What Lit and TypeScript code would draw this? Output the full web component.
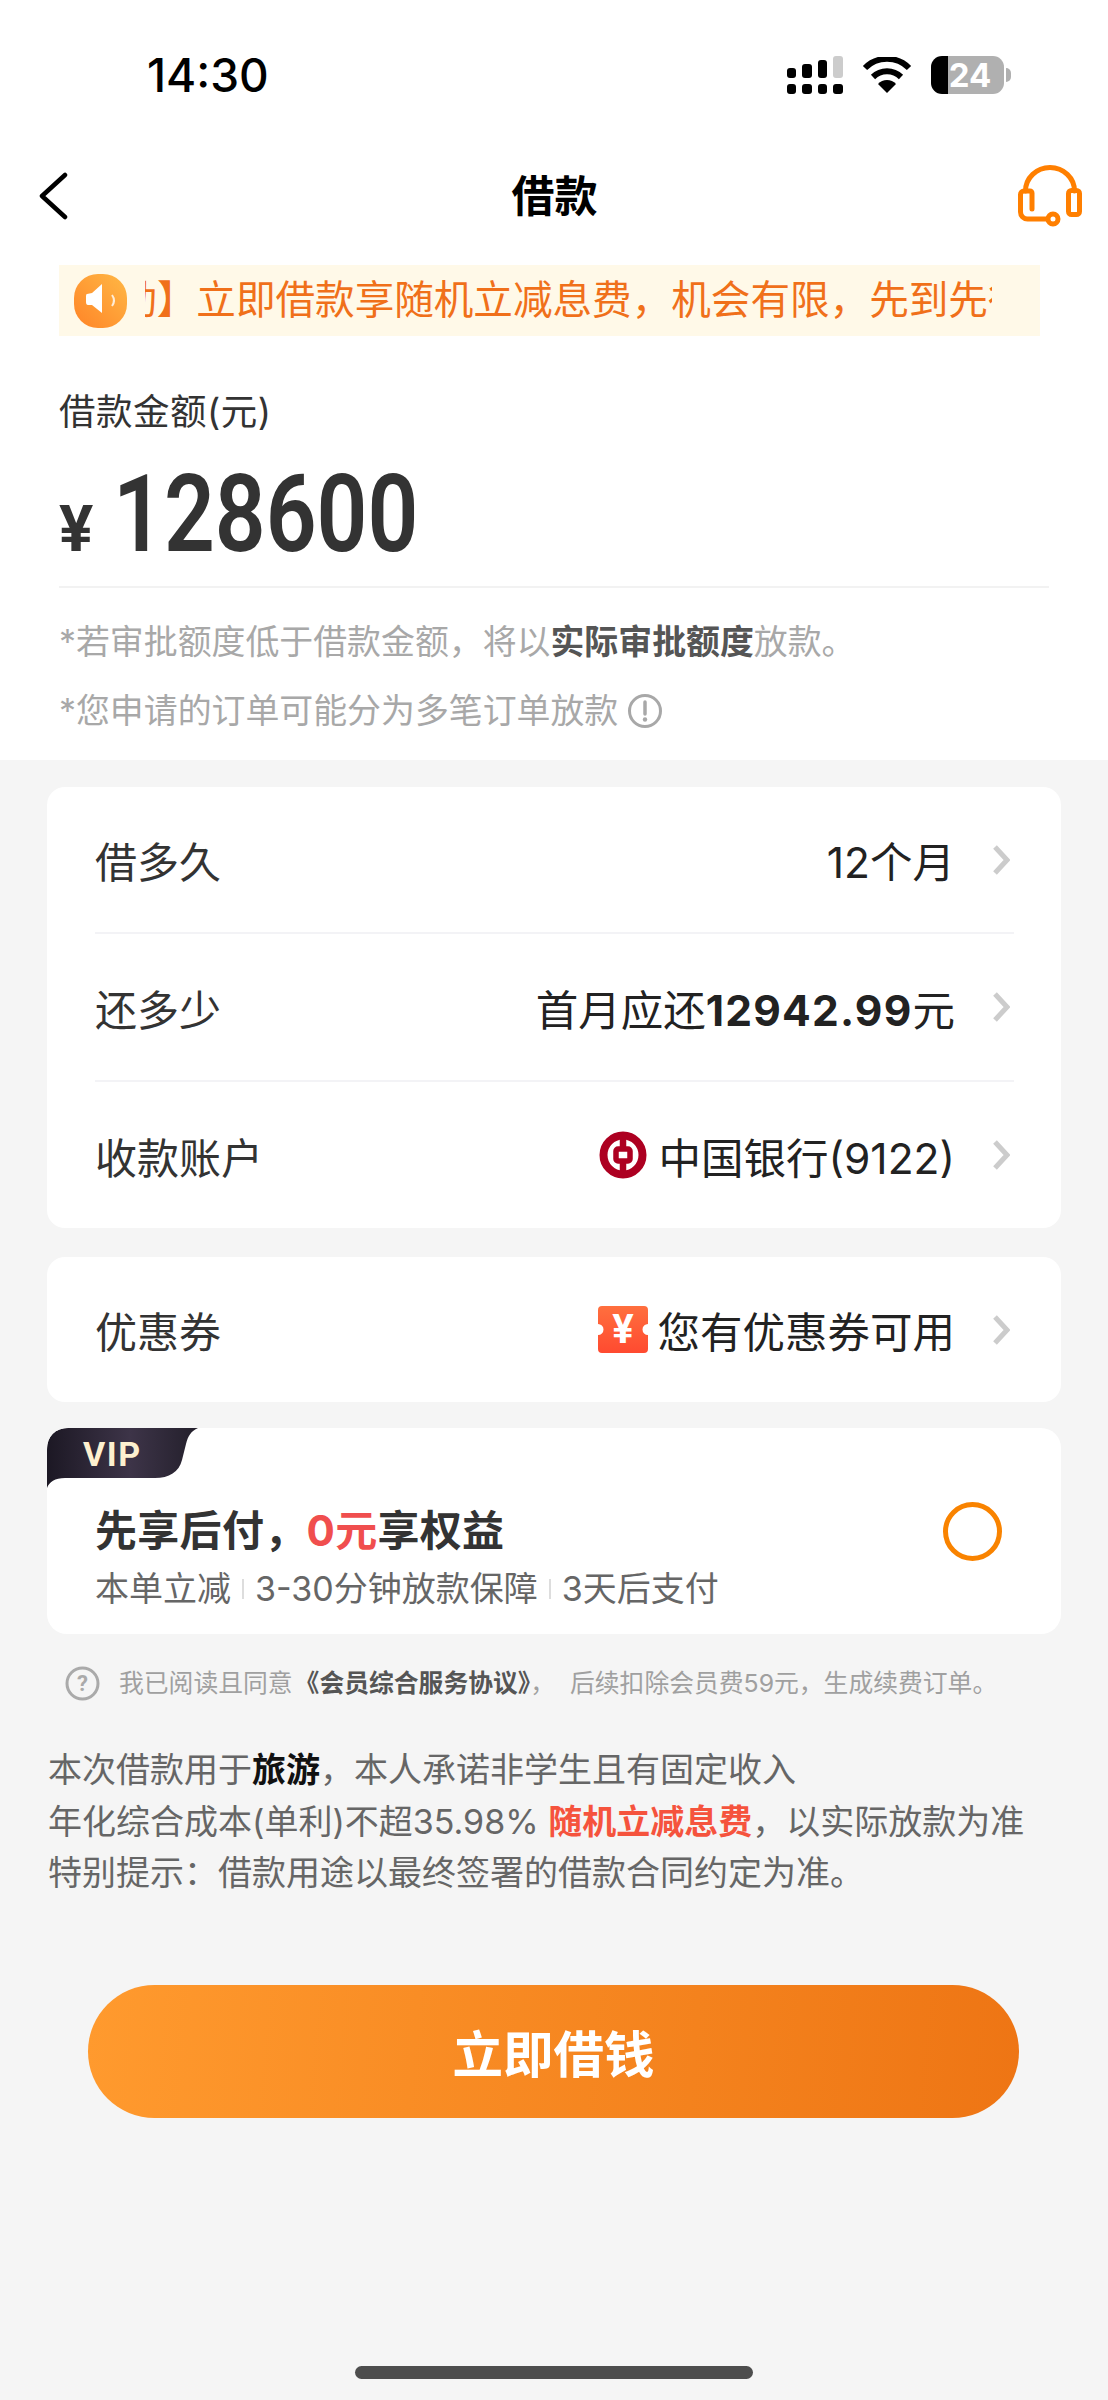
import { LitElement, html, css } from 'lit';
import { customElement } from 'lit/decorators.js';

const chevron = html`<svg class="chev" width="18" height="30" viewBox="0 0 18 30"><path d="M3 2 L15 15 L3 28" fill="none" stroke="#ccc" stroke-width="5"/></svg>`;

@customElement('app-root')
export class AppRoot extends LitElement {
  static styles = css`
    :host {
      display: block;
      width: 1108px;
      height: 2400px;
      background: #f5f5f5;
      font-family: Inter, "Noto Sans CJK SC", sans-serif;
      color: #333;
      overflow: hidden;
    }
    svg { display: block; flex: none; }

    .top { background: #fff; height: 760px; }

    .status { height: 150px; display: flex; align-items: center; padding: 0 97px 0 147px; box-sizing: border-box; }
    .time { font-size: 46px; font-weight: 500; color: #000; line-height: 1; }
    .status-right { margin-left: auto; display: flex; align-items: center; }
    .wifi { margin-left: 19px; }
    .battery {
      margin-left: 19px;
      width: 73px;
      height: 38px;
      border-radius: 11px;
      background: linear-gradient(90deg, #000 17px, #b0b0b0 17px);
      color: #fff;
      font-size: 33px;
      font-weight: 700;
      line-height: 38px;
      text-align: center;
      padding-left: 5px;
      box-sizing: border-box;
    }
    .nub { width: 5px; height: 14px; margin-left: 2px; background: #b0b0b0; border-radius: 0 7px 7px 0; }

    .nav { height: 92px; display: grid; grid-template-columns: 1fr auto 1fr; align-items: center; padding: 0 26px 0 39px; }
    .nav h1 { margin: 0; font-size: 43px; font-weight: 700; color: #000; line-height: 1; transform: translateX(-6px); }
    .nav .hs { justify-self: end; }

    .banner { margin: 23px 68px 0 59px; height: 71px; background: #fff9e8; display: flex; align-items: center; padding-left: 15px; }
    .marquee { width: 847px; margin-left: 18px; overflow: hidden; }
    .marquee span { display: block; white-space: nowrap; margin-left: -107px; font-size: 39.6px; line-height: 71px; color: #f0701a; }

    .amount { padding: 51px 59px 0; }
    .amount-label { font-size: 36.5px; letter-spacing: .5px; line-height: 50px; color: #333; }
    .amount-row { height: 134px; padding-top: 15px; border-bottom: 2px solid #f2f2f2; display: flex; align-items: baseline; }
    .yen { display: inline-block; font-family: Roboto, sans-serif; font-size: 64px; font-weight: 700; line-height: 125px; width: 54px; }
    .num { display: inline-block; font-family: Roboto, sans-serif; font-size: 108px; font-weight: 600; transform: scaleX(.825); transform-origin: left; line-height: 125px; }
    .note { font-size: 33.9px; color: #a8a8a8; display: flex; align-items: center; white-space: nowrap; line-height: 50px; }
    .note b { font-weight: 700; color: #555; }
    .n1 { margin-top: 29px; }
    .n2 { margin-top: 19px; }
    .tip { margin-left: 9px; }

    .card { margin: 0 47px 0 47px; background: #fff; border-radius: 18px; }
    .c1 { margin-top: 27px; padding: 0 47px 0 48px; }
    .c2 { margin-top: 29px; padding: 0 47px 0 48px; }
    .row { height: 145px; display: flex; align-items: center; font-size: 42px; color: #333; }
    .row + .row { height: 146px; border-top: 2px solid #f3f3f6; }
    .val { margin-left: auto; display: flex; align-items: center; color: #222; font-size: 42.5px; }
    .val b { font-weight: 700; letter-spacing: 1.2px; }
    .val svg { margin-right: 12px; }
    .val .coupon { margin-right: 9px; }
    .chev { margin-left: 37px; margin-right: 4px; }

    .vip { margin-top: 26px; height: 206px; overflow: hidden; border-radius: 20px; }
    .tag { height: 60px; width: 151px; background: linear-gradient(90deg, #1c1824, #3d3448 55%, #231f2b); clip-path: path('M22 0 H151 C144 3 141 8 139 16 L135 32 C132 44 122 50 108 50 H18 C8 50 2 54 0 60 V22 C0 8 8 0 22 0 Z'); }
    .tag span { display: block; padding-left: 36px; font-family: Roboto, sans-serif; font-size: 34px; font-weight: 700; letter-spacing: 1.5px; line-height: 52px; color: #fdf0cf; }
    .vip-body { display: flex; justify-content: space-between; padding: 18px 59px 0 48px; }
    .vip-title { font-size: 42px; font-weight: 700; letter-spacing: .3px; line-height: 50px; color: #333; }
    .vip-title em { font-style: normal; color: #f04e4e; }
    .vip-sub { margin-top: 10px; font-size: 34px; line-height: 46px; color: #666; display: flex; align-items: center; }
    .sep { width: 2px; height: 20px; margin: 0 11px; background: #ddd; }
    .radio { width: 59px; height: 59px; box-sizing: border-box; border: 5px solid #f98300; border-radius: 50%; margin-top: -4px; }

    .agree { margin: 31px 0 0 65px; display: flex; align-items: center; font-size: 24.8px; line-height: 36px; color: #a0a0a0; white-space: nowrap; }
    .agree b { color: #555; font-weight: 700; margin-left: 2px; }
    .agree svg { margin-right: 19px; }
    .agree .after { margin-left: 15px; }

    .legal { margin: 43px 47px 0 48px; font-size: 34px; line-height: 51.5px; color: #666; white-space: nowrap; }
    .legal b { font-weight: 700; color: #111; }
    .legal i { font-style: normal; font-weight: 700; color: #f5533d; }

    .cta { display: block; margin: 86px 89px 0 88px; width: 931px; height: 133px; border: 0; border-radius: 67px; background: linear-gradient(95deg, #ff9a2e, #ee7514); color: #fff; font-family: inherit; font-size: 50.5px; font-weight: 700; padding: 0; }

    .home { width: 398px; height: 13px; margin: 248px 0 0 355px; background: #4d4d4d; border-radius: 7px; }
  `;

  render() {
    return html`
      <div class="top">
        <div class="status">
          <div class="time">14:30</div>
          <div class="status-right">
            <svg width="56" height="38" viewBox="0 0 56 38">
              <rect x="0" y="28" width="9" height="10" rx="3"/><rect x="15" y="28" width="10" height="10" rx="3"/><rect x="31" y="28" width="9" height="10" rx="3"/><rect x="46" y="28" width="10" height="10" rx="3"/>
              <rect x="0" y="12" width="9" height="10" rx="3"/><rect x="15" y="8" width="10" height="14" rx="3"/><rect x="31" y="4" width="9" height="18" rx="3"/><rect x="46" y="0" width="10" height="22" rx="3" fill="#ccc"/>
            </svg>
            <svg class="wifi" width="50" height="36" viewBox="0 0 50 36">
              <path d="M3 11 A31 31 0 0 1 47 11 M11 20 A20 20 0 0 1 39 20" fill="none" stroke="#000" stroke-width="6"/>
              <path d="M25 36 L16 27 A12 12 0 0 1 34 27 Z"/>
            </svg>
            <div class="battery">24</div>
            <div class="nub"></div>
          </div>
        </div>

        <div class="nav">
          <svg width="30" height="48" viewBox="0 0 30 48"><path d="M26 3 L3 24 L26 45" fill="none" stroke="#000" stroke-width="4.5" stroke-linecap="round" stroke-linejoin="round"/></svg>
          <h1>借款</h1>
          <svg class="hs" width="64" height="62" viewBox="0 0 64 62" fill="none" stroke="#ff7f00" stroke-width="5" stroke-linecap="round" stroke-linejoin="round">
            <path d="M7.5 26 A24.5 23.5 0 0 1 56.5 26"/>
            <path d="M14 44 V28 A2 2 0 0 0 12 26 H6 A3.5 3.5 0 0 0 2.5 29.5 V47 A7 7 0 0 0 9.5 54 H30"/>
            <rect x="50.5" y="25.5" width="11" height="24" rx="3"/>
            <circle cx="35" cy="54" r="5" fill="#fff"/>
          </svg>
        </div>

        <div class="banner">
          <svg width="53" height="54" viewBox="0 0 53 54">
            <defs><linearGradient id="sp" x1="1" y1="0" x2="0" y2="1"><stop offset="0" stop-color="#ffb845"/><stop offset="1" stop-color="#ff8427"/></linearGradient></defs>
            <rect width="53" height="54" rx="24" fill="url(#sp)"/>
            <path d="M13 20 Q12 20 12 22 V28 Q12 31 14 31 H18 L28 39 V10 L18 19 Z" fill="#fff"/>
            <path d="M38 21 Q42 26.5 38 32" fill="none" stroke="#fff" stroke-opacity=".8" stroke-width="2"/>
          </svg>
          <div class="marquee"><span>【活动】立即借款享随机立减息费，机会有限，先到先得</span></div>
        </div>

        <div class="amount">
          <div class="amount-label">借款金额(元)</div>
          <div class="amount-row"><span class="yen">¥</span><span class="num">128600</span></div>
          <div class="note n1"><span>*若审批额度低于借款金额，将以<b>实际审批额度</b>放款。</span></div>
          <div class="note n2"><span>*您申请的订单可能分为多笔订单放款</span><svg class="tip" width="36" height="36" viewBox="0 0 36 36"><circle cx="18" cy="18" r="15.5" fill="none" stroke="#a8a8a8" stroke-width="3"/><path d="M18 9 V21" stroke="#a8a8a8" stroke-width="3.5" stroke-linecap="round"/><circle cx="18" cy="26.5" r="2.2" fill="#a8a8a8"/></svg></div>
        </div>
      </div>

      <div class="card c1">
        <div class="row">借多久<div class="val">12个月</div>${chevron}</div>
        <div class="row">还多少<div class="val"><span>首月应还<b>12942.99</b>元</span></div>${chevron}</div>
        <div class="row">收款账户<div class="val">
          <svg width="48" height="48" viewBox="0 0 48 48" fill="none" stroke="#ad0021">
            <circle cx="24" cy="24" r="19.5" stroke-width="8"/>
            <rect x="17" y="18" width="14" height="12" rx="2" stroke-width="5.5"/>
            <path d="M24 2 V16 M24 32 V46" stroke-width="6.5"/>
          </svg><span>中国银行(9122)</span></div>${chevron}</div>
      </div>

      <div class="card c2">
        <div class="row">优惠券<div class="val">
          <svg class="coupon" width="50" height="47" viewBox="0 0 50 47">
            <defs><linearGradient id="cp" x1="0" y1="0" x2="0" y2="1"><stop offset="0" stop-color="#ff6f3e"/><stop offset="1" stop-color="#ff4a30"/></linearGradient></defs>
            <path d="M4 0 H46 A4 4 0 0 1 50 4 V18 A5.5 5.5 0 0 0 50 29 V43 A4 4 0 0 1 46 47 H4 A4 4 0 0 1 0 43 V29 A5.5 5.5 0 0 0 0 18 V4 A4 4 0 0 1 4 0 Z" fill="url(#cp)"/>
            <text x="25" y="37" text-anchor="middle" font-size="40" font-weight="700" fill="#fff" font-family="Roboto, sans-serif">¥</text>
          </svg><span>您有优惠券可用</span></div>${chevron}</div>
      </div>

      <div class="card vip">
        <div class="tag"><span>VIP</span></div>
        <div class="vip-body">
          <div>
            <div class="vip-title">先享后付，<em>0元</em>享权益</div>
            <div class="vip-sub">本单立减<i class="sep"></i>3-30分钟放款保障<i class="sep"></i>3天后支付</div>
          </div>
          <div class="radio"></div>
        </div>
      </div>

      <div class="agree">
        <svg width="35" height="35" viewBox="0 0 35 35"><circle cx="17.5" cy="17.5" r="15.5" fill="none" stroke="#aaa" stroke-width="3"/><text x="17.5" y="25" text-anchor="middle" font-size="22" font-weight="700" fill="#aaa" font-family="Roboto, sans-serif">?</text></svg>
        <span>我已阅读且同意<b>《会员综合服务协议》</b>，<span class="after">后续扣除会员费59元，生成续费订单。</span></span>
      </div>

      <div class="legal">
        <div>本次借款用于<b>旅游</b>，本人承诺非学生且有固定收入</div>
        <div>年化综合成本(单利)不超35.98% <i>随机立减息费</i>，以实际放款为准</div>
        <div>特别提示：借款用途以最终签署的借款合同约定为准。</div>
      </div>

      <button class="cta">立即借钱</button>
      <div class="home"></div>
    `;
  }
}
